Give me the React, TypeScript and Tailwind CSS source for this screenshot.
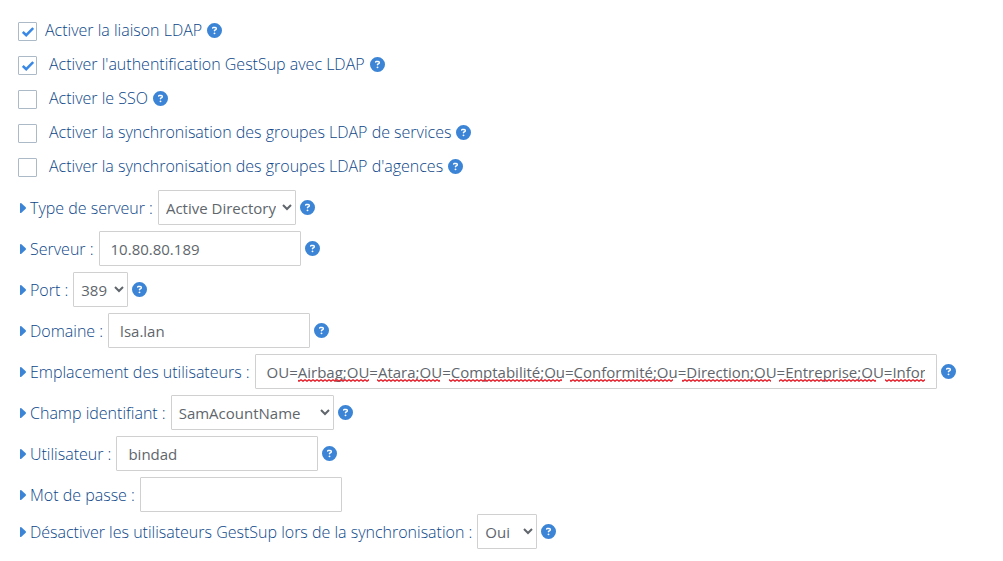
import { useId, useState, type ReactNode } from "react";
import { FaCircleQuestion } from "react-icons/fa6";

function Help() {
  return (
    <button
      type="button"
      aria-label="Aide"
      className="flex h-5 shrink-0 items-center text-[#3b84d6]"
    >
      <FaCircleQuestion className="size-[15px]" />
    </button>
  );
}

type OptionProps = { label: string; initial?: boolean; first?: boolean };

function Option({ label, initial = false, first = false }: OptionProps) {
  const id = useId();
  const [checked, setChecked] = useState(initial);
  return (
    <div className="flex items-start gap-1">
      <span className="mt-[2px] grid size-[19px] shrink-0 place-items-center">
        <input
          id={id}
          type="checkbox"
          checked={checked}
          onChange={() => setChecked(!checked)}
          className="col-start-1 row-start-1 size-full appearance-none rounded-[1px] border border-[#acb9c6] bg-white"
        />
        {checked && (
          <svg
            aria-hidden="true"
            viewBox="0 0 12 10"
            className="pointer-events-none col-start-1 row-start-1 h-[10px] w-3"
          >
            <path
              d="M.8 5 L4.2 8.2 L11.2 1"
              fill="none"
              stroke="#3a88e6"
              strokeWidth="2.5"
            />
          </svg>
        )}
      </span>
      <label htmlFor={id} className={first ? "mr-px ml-1" : "mr-px ml-2"}>
        {label}
      </label>
      <Help />
    </div>
  );
}

type FieldProps = {
  id: string;
  label: string;
  help?: boolean;
  children: ReactNode;
};

function Field({ id, label, help = true, children }: FieldProps) {
  return (
    <div className="flex items-center gap-1">
      <label htmlFor={id} className="mr-px flex shrink-0 items-center gap-1">
        <svg
          aria-hidden="true"
          viewBox="0 0 6 10"
          className="h-[10px] w-[6px] fill-[#3b84d6]"
        >
          <path d="M0 .5 Q0 0 .8 0 L1.4 .2 L5.7 4.3 Q6.2 5 5.7 5.7 L1.4 9.8 L.8 10 Q0 10 0 9.5 Z" />
        </svg>
        {label} :
      </label>
      {children}
      {help && <Help />}
    </div>
  );
}

const control =
  "h-[35px] rounded-[1px] border border-[#d0d0d0] bg-white text-[15px] font-normal text-[#60666c]";
const textBox = `${control} w-[202px] px-[11px]`;
const selectBox = `${control} px-[3px]`;

const misspelled = [
  [31, 71],
  [110, 63],
  [182, 113],
  [303, 103],
  [415, 89],
  [512, 97],
  [618, 40],
];

function SpellingMarks() {
  return (
    <svg
      aria-hidden="true"
      viewBox="0 0 658 3"
      className="pointer-events-none absolute top-[25px] left-3 h-[3px] w-[658px]"
    >
      <defs>
        <pattern id="wave" width="4" height="3" patternUnits="userSpaceOnUse">
          <path
            d="M-2 .8 L0 2.2 L2 .8 L4 2.2 L6 .8"
            fill="none"
            stroke="#e3202b"
            strokeWidth="1.4"
          />
        </pattern>
      </defs>
      {misspelled.map(([x, width]) => (
        <rect key={x} x={x} width={width} height="3" fill="url(#wave)" />
      ))}
    </svg>
  );
}

export default function App() {
  return (
    <main className="bg-white px-[18px] pt-5 pb-3 font-['Open_Sans',sans-serif] text-[16px] leading-[20px] font-light text-[#0c4789]">
      <form className="flex flex-col">
        <div className="flex flex-col gap-[13px]">
          <Option label="Activer la liaison LDAP" initial first />
          <Option label="Activer l'authentification GestSup avec LDAP" initial />
          <Option label="Activer le SSO" />
          <Option label="Activer la synchronisation des groupes LDAP de services" />
          <Option label="Activer la synchronisation des groupes LDAP d'agences" />
        </div>
        <div className="mt-[13px] flex flex-col gap-[6px] pl-[2px]">
          <Field id="type" label="Type de serveur">
            <select id="type" className={`${selectBox} w-[138px]`}>
              <option>Active Directory</option>
              <option>OpenLDAP</option>
            </select>
          </Field>
          <Field id="server" label="Serveur">
            <input id="server" defaultValue="10.80.80.189" className={textBox} />
          </Field>
          <Field id="port" label="Port">
            <select id="port" className={`${selectBox} w-[55px]`}>
              <option>389</option>
              <option>636</option>
            </select>
          </Field>
          <Field id="domain" label="Domaine">
            <input id="domain" defaultValue="lsa.lan" className={textBox} />
          </Field>
          <Field id="location" label="Emplacement des utilisateurs">
            <div className="relative w-full max-w-[682px] overflow-hidden">
              <input
                id="location"
                spellCheck={false}
                defaultValue="OU=Airbag;OU=Atara;OU=Comptabilité;Ou=Conformité;Ou=Direction;OU=Entreprise;OU=Informatique"
                className={`${control} block w-full px-[11px]`}
              />
              <SpellingMarks />
            </div>
          </Field>
          <Field id="identifier" label="Champ identifiant">
            <select id="identifier" className={`${selectBox} w-[163px]`}>
              <option>SamAcountName</option>
              <option>UserPrincipalName</option>
            </select>
          </Field>
          <Field id="user" label="Utilisateur">
            <input id="user" defaultValue="bindad" className={textBox} />
          </Field>
          <Field id="password" label="Mot de passe" help={false}>
            <input id="password" type="password" className={textBox} />
          </Field>
        </div>
        <div className="mt-[2px] pl-[2px]">
          <Field
            id="disable"
            label="Désactiver les utilisateurs GestSup lors de la synchronisation"
          >
            <select id="disable" className={`${selectBox} w-[60px]`}>
              <option>Oui</option>
              <option>Non</option>
            </select>
          </Field>
        </div>
      </form>
    </main>
  );
}
